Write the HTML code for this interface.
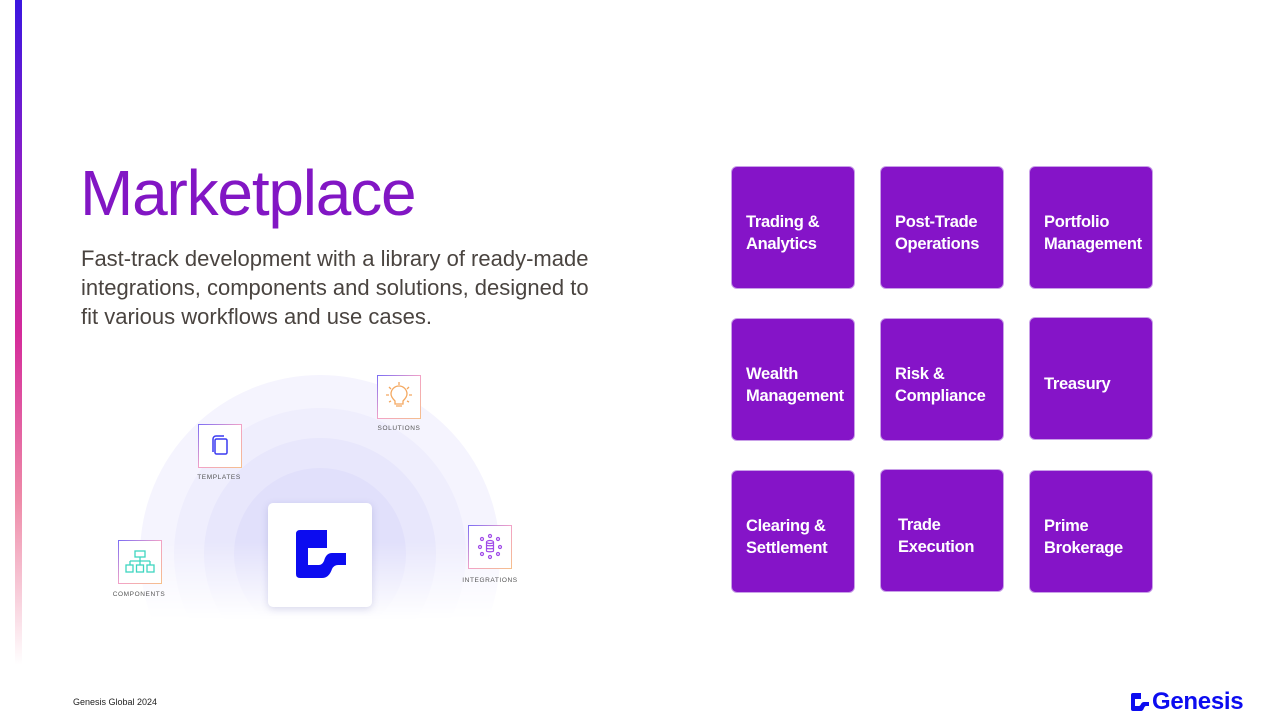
<!DOCTYPE html>
<html><head><meta charset="utf-8"><style>
*{margin:0;padding:0;box-sizing:border-box}
body{width:1280px;height:718px;background:#fff;position:relative;overflow:hidden;font-family:"Liberation Sans",sans-serif}
.bar{position:absolute;left:15px;top:0;width:7px;height:665px;background:linear-gradient(#3a16e0 0%,#8a1ec8 25%,#d42a9a 50%,#ee8aa8 75%,rgba(255,255,255,0) 100%)}
h1{position:absolute;left:80px;top:156px;font-size:64px;font-weight:400;color:#8216c4;letter-spacing:-1.2px}
.p{position:absolute;left:81px;top:244px;font-size:22px;line-height:29px;color:#4a4440;width:522px}
.tile{position:absolute;width:124px;height:123px;background:#8514c8;border-radius:6px;border:1px solid #c9a0e8;color:#fff;font-weight:700;font-size:16.5px;line-height:22px;display:flex;align-items:center;padding-left:14px;padding-top:10px;letter-spacing:-0.3px}
.ring{position:absolute;border-radius:50%}
.ic{position:absolute;width:44px;height:44px;background:#fff;border:1.5px solid;border-image:linear-gradient(135deg,#7a6cf5,#f2a2c8,#f6c08a) 1}
.lb{position:absolute;font-size:6.5px;letter-spacing:0.6px;color:#555;width:80px;text-align:center}
.foot{position:absolute;left:73px;top:697px;font-size:9px;color:#222}
</style></head><body>
<div class="bar"></div>
<h1>Marketplace</h1>
<div class="p">Fast-track development with a library of ready-made integrations, components and solutions, designed to fit various workflows and use cases.</div>

<div style="position:absolute;left:120px;top:360px;width:420px;height:260px;overflow:hidden;-webkit-mask-image:linear-gradient(#000 70%,transparent 100%);mask-image:linear-gradient(#000 70%,transparent 100%)">
<div class="ring" style="left:20px;top:15px;width:360px;height:360px;background:#f5f4fe"></div>
<div class="ring" style="left:54px;top:48px;width:292px;height:292px;background:#efeefd"></div>
<div class="ring" style="left:84px;top:78px;width:232px;height:232px;background:#e8e7fc"></div>
<div class="ring" style="left:114px;top:108px;width:172px;height:172px;background:#e1e0fb"></div>
</div>
<div style="position:absolute;left:268px;top:503px;width:104px;height:104px;background:#fff;border-radius:5px;box-shadow:0 2px 8px rgba(80,80,160,.2)">
<svg width="104" height="104" viewBox="0 0 104 104"><path d="M28 31Q28 27 32 27H59V45H40V62H51Q54 62 56 58Q58 50 64 50H78V62H70Q66 62 64 66Q61 75 54 75H32Q28 75 28 71Z" fill="#0c0cf0"/></svg>
</div>
<div class="ic" style="left:118px;top:540px"><svg width="42" height="42" viewBox="0 0 42 42" fill="none" stroke="#3ed6c0" stroke-width="1.3"><rect x="16" y="10" width="10" height="6"/><path d="M21 16v4M11 20h20M11 20v4M21 20v4M31 20v4"/><rect x="7" y="24" width="7" height="7"/><rect x="17.5" y="24" width="7" height="7"/><rect x="28" y="24" width="7" height="7"/></svg></div>
<div class="lb" style="left:99px;top:591px">COMPONENTS</div>
<div class="ic" style="left:198px;top:424px"><svg width="42" height="42" viewBox="0 0 42 42" fill="none" stroke="#3a3af0" stroke-width="1.5"><rect x="16" y="14" width="12" height="15" rx="1.5"/><path d="M14 27V14a3 3 0 0 1 3-3h8"/></svg></div>
<div class="lb" style="left:179px;top:474px">TEMPLATES</div>
<div class="ic" style="left:377px;top:375px"><svg width="42" height="42" viewBox="0 0 42 42" fill="none" stroke="#f4a860" stroke-width="1.3"><path d="M17 25c-3-3-4-5-4-7a8 8 0 0 1 16 0c0 2-1 4-4 7v3h-8z"/><path d="M18 30h6M21 6v3M11 11l2 2M31 11l-2 2M8 19h3M31 19h3M11 26l2-1M31 26l-2-1"/></svg></div>
<div class="lb" style="left:359px;top:425px">SOLUTIONS</div>
<div class="ic" style="left:468px;top:525px"><svg width="42" height="42" viewBox="0 0 42 42" fill="none" stroke="#a04ae8" stroke-width="1.2"><ellipse cx="21" cy="16" rx="3.5" ry="1.5"/><path d="M17.5 16v9c0 1 7 1 7 0v-9M17.5 19c0 1 7 1 7 0M17.5 22c0 1 7 1 7 0"/><circle cx="21" cy="10" r="1.5"/><circle cx="21" cy="31" r="1.5"/><circle cx="13" cy="13" r="1.5"/><circle cx="29" cy="13" r="1.5"/><circle cx="11" cy="21" r="1.5"/><circle cx="31" cy="21" r="1.5"/><circle cx="13" cy="28" r="1.5"/><circle cx="29" cy="28" r="1.5"/></svg></div>
<div class="lb" style="left:450px;top:577px">INTEGRATIONS</div>

<div class="tile" style="left:731px;top:166px">Trading &amp;<br>Analytics</div>
<div class="tile" style="left:880px;top:166px">Post-Trade<br>Operations</div>
<div class="tile" style="left:1029px;top:166px">Portfolio<br>Management</div>
<div class="tile" style="left:731px;top:318px">Wealth<br>Management</div>
<div class="tile" style="left:880px;top:318px">Risk &amp;<br>Compliance</div>
<div class="tile" style="left:1029px;top:317px">Treasury</div>
<div class="tile" style="left:731px;top:470px">Clearing &amp;<br>Settlement</div>
<div class="tile" style="left:880px;top:469px;padding-left:17px">Trade<br>Execution</div>
<div class="tile" style="left:1029px;top:470px">Prime<br>Brokerage</div>

<div class="foot">Genesis Global 2024</div>
<div style="position:absolute;left:1130px;top:688px;display:flex;align-items:center">
<svg width="20" height="20" viewBox="0 0 20 20"><path d="M1 3Q1 1 3 1H11V7H5V14H9Q10 14 11 12Q12 10 14 10H19V14H16Q15 14 14 16Q13 19 11 19H3Q1 19 1 17Z" fill="#0c0cf0"/></svg>
<span style="font-size:24px;font-weight:700;color:#0c0cf0;margin-left:2px;letter-spacing:-0.3px">Genesis</span></div>
</body></html>
